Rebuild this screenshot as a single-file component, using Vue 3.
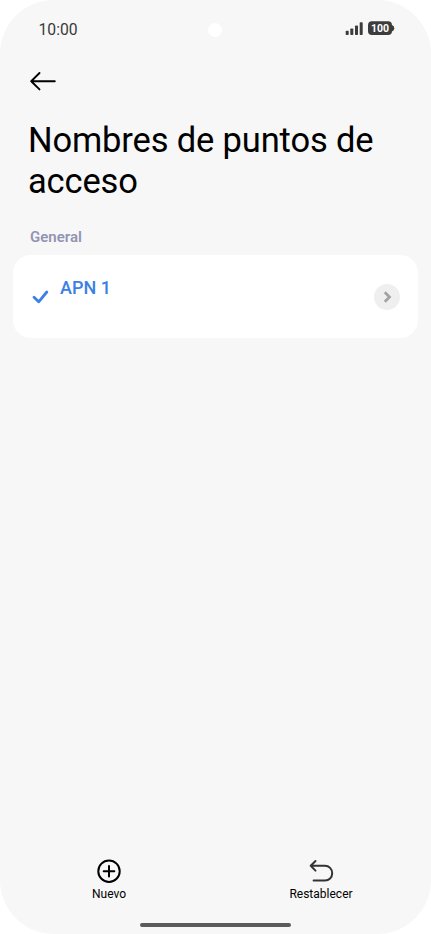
<script setup>
const accessPoints = [{ name: 'APN 1', selected: true }]
</script>

<template>
  <div class="screen">
    <header class="status">
      <span class="time">10:00</span>
      <span class="camera"></span>
      <svg class="indicators" width="50" height="16" viewBox="0 0 50 16">
        <g fill="#3c3c3c">
          <rect x="0.7" y="10.8" width="3" height="4.3" rx="0.8" />
          <rect x="5.3" y="8.5" width="3" height="6.6" rx="0.8" />
          <rect x="10" y="5.5" width="3" height="9.6" rx="0.8" />
          <rect x="14.7" y="2.3" width="3" height="12.8" rx="0.8" />
          <rect x="23" y="1.3" width="24" height="13.8" rx="4" />
          <path d="M47 5Q49.3 5.8 49.3 8.2T47 11.4Z" />
        </g>
        <text x="35" y="11.9" text-anchor="middle" class="charge">100</text>
      </svg>
    </header>

    <nav class="nav">
      <svg width="28" height="20" viewBox="0 0 28 20" fill="none" stroke="#000" stroke-width="1.9" stroke-linecap="round" stroke-linejoin="round">
        <path d="M25.8 10.2H2.2M10.5 2L2.2 10.2L10.5 18.4" />
      </svg>
    </nav>

    <h1 class="title">Nombres de puntos de acceso</h1>

    <main class="content">
      <h2 class="section">General</h2>
      <div v-for="point in accessPoints" :key="point.name" class="card">
        <svg v-if="point.selected" class="check" width="18" height="16" viewBox="0 0 18 16" fill="none" stroke="#3b80e4" stroke-width="2.8" stroke-linecap="round" stroke-linejoin="round">
          <path d="M3 8.3L7.7 12.8L15.8 3" />
        </svg>
        <span class="name">{{ point.name }}</span>
        <span class="more">
          <svg width="26" height="26" viewBox="0 0 26 26" fill="none" stroke="#a2a2a2" stroke-width="2.7" stroke-linejoin="miter">
            <path d="M10.8 8.2L15.5 13L10.8 17.8" />
          </svg>
        </span>
      </div>
    </main>

    <footer class="actions">
      <div class="action">
        <svg width="26" height="26" viewBox="0 0 26 26" fill="none" stroke="#000" stroke-width="2" stroke-linecap="round">
          <circle cx="13" cy="13.2" r="10.7" />
          <path d="M13 7.9V18.5M7.7 13.2H18.3" />
        </svg>
        <span>Nuevo</span>
      </div>
      <div class="action">
        <svg width="26" height="26" viewBox="0 0 26 26" fill="none" stroke="#333" stroke-width="2" stroke-linecap="round" stroke-linejoin="round">
          <path d="M7.5 3L2.7 7.8L7.5 12.6M2.7 7.8H17C21 7.8 24.2 10.9 24.2 15.3S21 22.5 17 22.5H5.6" />
        </svg>
        <span>Restablecer</span>
      </div>
    </footer>
    <div class="home"></div>
  </div>
</template>

<style>
body {
  background: #fff;
}
</style>

<style scoped>
.screen {
  display: flex;
  flex-direction: column;
  width: 431px;
  height: 934px;
  box-sizing: border-box;
  overflow: hidden;
  border-radius: 54px;
  background: #f7f7f7;
  color: #000;
  font-family: Roboto, sans-serif;
}
.status {
  display: grid;
  grid-template-columns: 1fr 14px 1fr;
  align-items: center;
  height: 60px;
  padding: 0 36px 0 38.5px;
  box-sizing: border-box;
}
.time {
  font-size: 15.7px;
  font-weight: 450;
  line-height: 18px;
  color: #3a3a3a;
}
.camera {
  width: 14px;
  height: 14px;
  margin-left: -2px;
  border-radius: 50%;
  background: #fff;
}
.indicators {
  justify-self: end;
  margin-top: -4px;
}
.charge {
  font-size: 10.5px;
  font-weight: 700;
  fill: #fff;
}
.nav {
  display: flex;
  height: 20px;
  padding: 11px 29px 0;
}
.title {
  margin: 29px 28px 0;
  font-size: 34.5px;
  font-weight: 400;
  line-height: 41px;
  letter-spacing: -0.15px;
}
.content {
  flex: 1;
  padding: 26px 13px 0;
}
.section {
  margin: 0 17px 9px;
  font-size: 15px;
  font-weight: 600;
  line-height: 18px;
  color: #9294b3;
}
.card {
  display: flex;
  align-items: center;
  height: 83px;
  padding: 0 18px;
  box-sizing: border-box;
  border-radius: 18px;
  background: #fff;
}
.name {
  flex: 1;
  margin: 0 0 18px 11px;
  font-size: 18px;
  font-weight: 500;
  line-height: 22px;
  color: #3b80e4;
}
.more {
  width: 26px;
  height: 26px;
  border-radius: 50%;
  background: #efefef;
}
.more svg,
.action svg {
  display: block;
}
.actions {
  display: flex;
  justify-content: space-between;
  padding: 0 66px 22px 65px;
}
.action {
  display: flex;
  flex-direction: column;
  align-items: center;
  width: 88px;
  font-size: 12px;
  line-height: 14px;
  gap: 3px;
}
.home {
  width: 151px;
  height: 4px;
  margin: 0 auto 7px;
  border-radius: 2px;
  background: #5b5b5b;
}
</style>
